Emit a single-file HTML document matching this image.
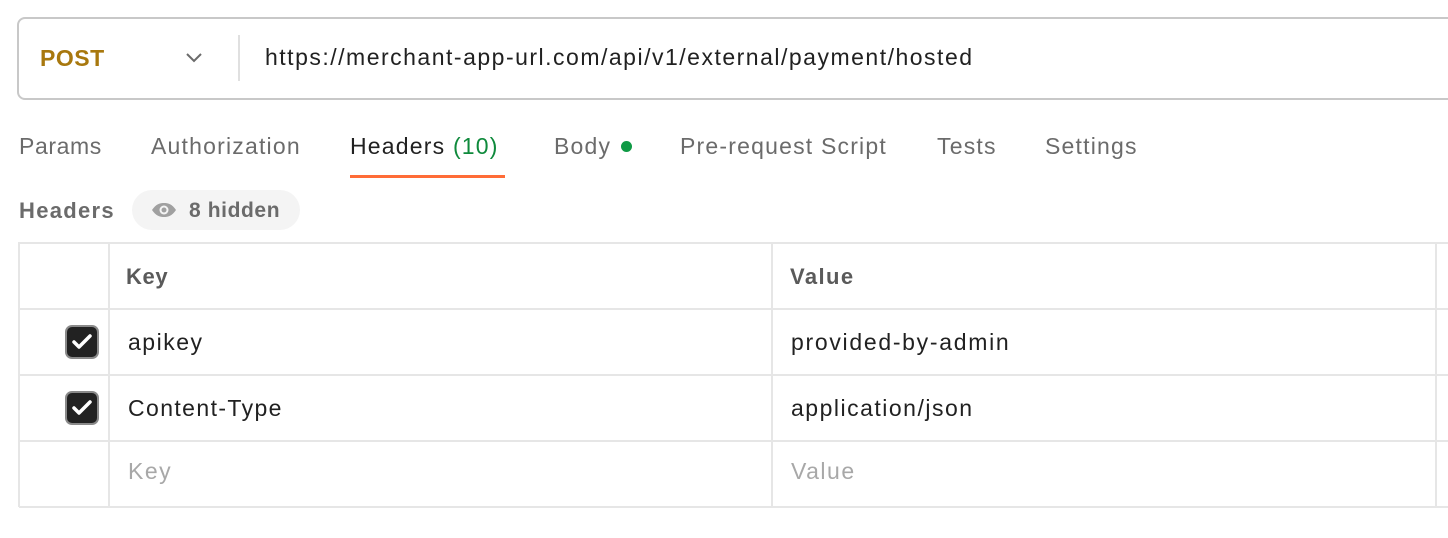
<!DOCTYPE html>
<html><head><style>
*{margin:0;padding:0;box-sizing:border-box}
body{width:1448px;height:538px;background:#fff;font-family:"Liberation Sans",sans-serif;position:relative;overflow:hidden;color:#212121}
.a{position:absolute;white-space:nowrap;line-height:1}
.box{position:absolute;left:17px;top:17px;width:1460px;height:83px;border:2px solid #c8c8c8;border-radius:8px}
.tab{position:absolute;top:133px;font-size:23px;color:#6b6b6b;line-height:26px;letter-spacing:1.2px;white-space:nowrap}
.vl{position:absolute;width:2px;background:#e6e6e6;top:242px;height:265px}
.hl{position:absolute;left:19px;width:1440px;height:2px;background:#e6e6e6}
.cb{position:absolute;left:65px;width:34px;height:34px;border-radius:7px;background:#222;border:2px solid #8a8a8a}
.t{position:absolute;font-size:23px;line-height:26px;letter-spacing:1.5px;white-space:nowrap}
</style></head><body>
<div class="box"></div>
<div class="a" style="left:40px;top:47px;font-size:23px;font-weight:bold;color:#a8780e;letter-spacing:0.5px">POST</div>
<svg class="a" style="left:185px;top:52px" width="18" height="12" viewBox="0 0 18 12"><path d="M2 2l7 7 7-7" fill="none" stroke="#6b6b6b" stroke-width="2"/></svg>
<div class="a" style="left:238px;top:35px;width:2px;height:46px;background:#e0e0e0"></div>
<div class="a" style="left:265px;top:46px;font-size:23px;color:#212121;letter-spacing:1.5px">https://merchant-app-url.com/api/v1/external/payment/hosted</div>

<div class="tab" style="left:19px;letter-spacing:0.6px">Params</div>
<div class="tab" style="left:151px">Authorization</div>
<div class="tab" style="left:350px;color:#212121">Headers <span style="color:#0f8a3c">(10)</span></div>
<div class="tab" style="left:554px">Body</div>
<div class="a" style="left:621px;top:141px;width:11px;height:11px;border-radius:50%;background:#0f9a45"></div>
<div class="tab" style="left:680px">Pre-request Script</div>
<div class="tab" style="left:937px">Tests</div>
<div class="tab" style="left:1045px">Settings</div>
<div class="a" style="left:350px;top:175px;width:155px;height:3px;background:#ff6c37"></div>

<div class="a" style="left:19px;top:200px;font-size:22px;font-weight:bold;color:#6b6b6b;letter-spacing:1.3px">Headers</div>
<div class="a" style="left:132px;top:190px;width:168px;height:40px;border-radius:20px;background:#f4f4f4"></div>
<svg class="a" style="left:151px;top:202px" width="26" height="16" viewBox="0 0 26 16"><path d="M1 8C5 2 9 1 13 1s8 1 12 7c-4 6-8 7-12 7S5 14 1 8z" fill="#a0a0a0"/><circle cx="13" cy="8" r="4.5" fill="#f4f4f4"/><circle cx="13" cy="8" r="2.5" fill="#a0a0a0"/></svg>
<div class="a" style="left:189px;top:200px;font-size:21px;font-weight:bold;color:#6b6b6b;letter-spacing:0.6px">8 hidden</div>

<div class="hl" style="top:242px"></div>
<div class="hl" style="top:308px"></div>
<div class="hl" style="top:374px"></div>
<div class="hl" style="top:440px"></div>
<div class="hl" style="top:506px"></div>
<div class="vl" style="left:18px"></div>
<div class="vl" style="left:108px"></div>
<div class="vl" style="left:771px"></div>
<div class="vl" style="left:1435px"></div>

<div class="t" style="left:126px;top:264px;font-weight:bold;color:#5a5a5a;font-size:22px;letter-spacing:0.6px">Key</div>
<div class="t" style="left:790px;top:264px;font-weight:bold;color:#5a5a5a;font-size:22px;letter-spacing:1.4px">Value</div>

<div class="cb" style="top:325px"></div>
<svg class="a" style="left:70px;top:331px" width="24" height="22" viewBox="0 0 24 22"><path d="M4 11l5 5L20 5" fill="none" stroke="#fff" stroke-width="3.5" stroke-linecap="round" stroke-linejoin="round"/></svg>
<div class="t" style="left:128px;top:329px">apikey</div>
<div class="t" style="left:791px;top:329px;letter-spacing:1.7px">provided-by-admin</div>

<div class="cb" style="top:391px"></div>
<svg class="a" style="left:70px;top:397px" width="24" height="22" viewBox="0 0 24 22"><path d="M4 11l5 5L20 5" fill="none" stroke="#fff" stroke-width="3.5" stroke-linecap="round" stroke-linejoin="round"/></svg>
<div class="t" style="left:128px;top:395px;letter-spacing:1.4px">Content-Type</div>
<div class="t" style="left:791px;top:395px">application/json</div>

<div class="t" style="left:128px;top:458px;color:#a8a8a8">Key</div>
<div class="t" style="left:791px;top:458px;color:#a8a8a8">Value</div>
</body></html>
